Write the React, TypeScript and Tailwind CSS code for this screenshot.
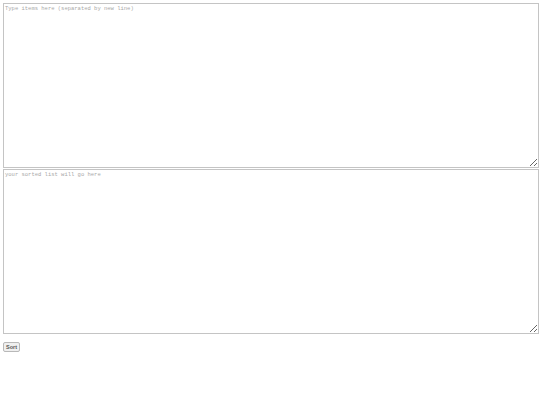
import React from "react";

export default function App() {
  return (
    <div className="w-[540px] h-[405px] bg-white px-[3px] pt-[3px]">
      <div className="flex flex-col gap-[1px]">
        <textarea
          className="block w-[536px] h-[165px] border border-[#c4c4c4] bg-white px-[1px] py-[1px] font-['Liberation_Mono',monospace] text-[5.5px] leading-[7px] text-[#333] placeholder:text-[#a8a8a8] outline-none"
          placeholder="Type items here (separated by new line)"
        />
        <textarea
          className="block w-[536px] h-[165px] border border-[#c4c4c4] bg-white px-[1px] py-[1px] font-['Liberation_Mono',monospace] text-[5.5px] leading-[7px] text-[#333] placeholder:text-[#a8a8a8] outline-none"
          placeholder="your sorted list will go here"
        />
      </div>
      <button className="block mt-[8px] h-[10px] px-[2px] border border-[#b8b8b8] rounded-[2px] bg-[#efefef] font-['Liberation_Sans',Arial,sans-serif] text-[5.5px] leading-[8px] font-bold text-[#555]">
        Sort
      </button>
    </div>
  );
}
